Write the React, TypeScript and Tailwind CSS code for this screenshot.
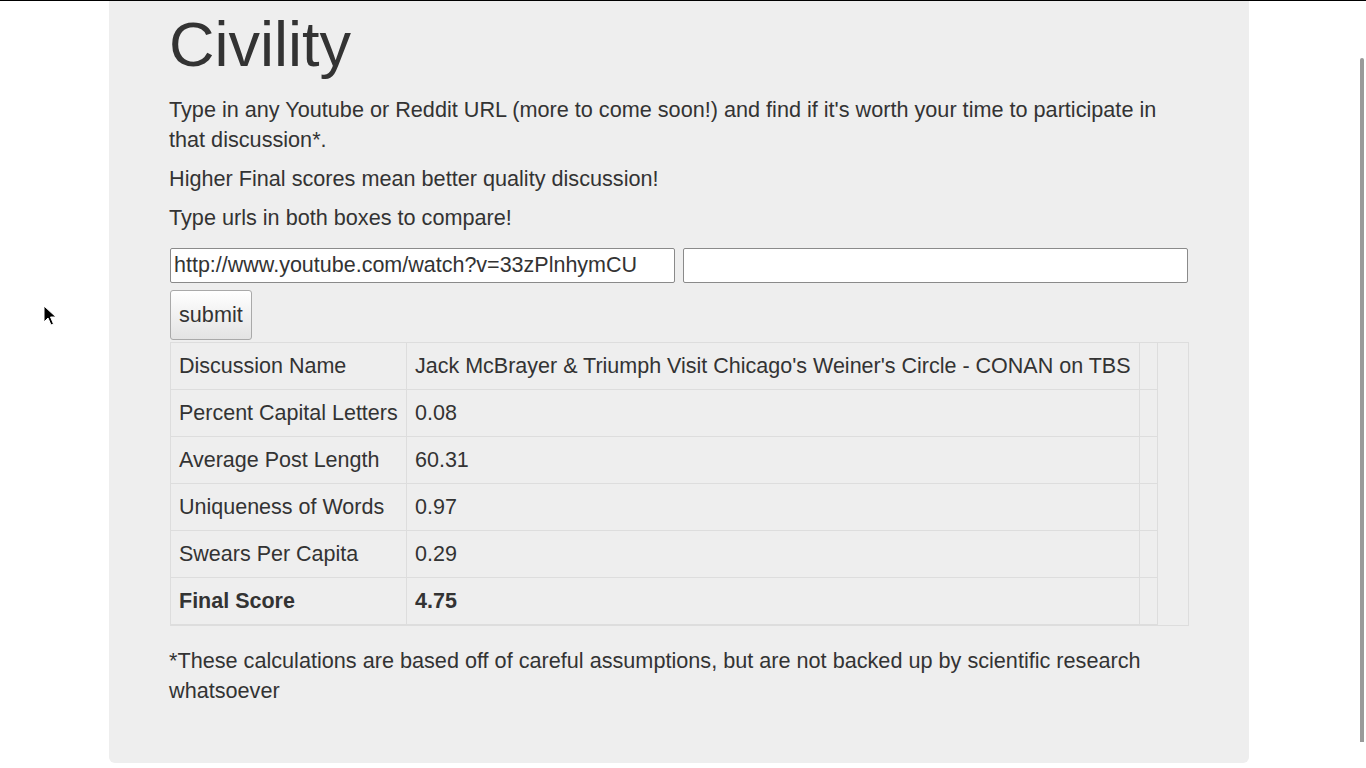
import React from 'react'

type Row = { label: string; value: string; bold?: boolean }

const rows: Row[] = [
  { label: 'Discussion Name', value: "Jack McBrayer & Triumph Visit Chicago's Weiner's Circle - CONAN on TBS" },
  { label: 'Percent Capital Letters', value: '0.08' },
  { label: 'Average Post Length', value: '60.31' },
  { label: 'Uniqueness of Words', value: '0.97' },
  { label: 'Swears Per Capita', value: '0.29' },
  { label: 'Final Score', value: '4.75', bold: true },
]

export default function App() {
  return (
    <div className="relative min-h-[768px] bg-white text-[#333] overflow-hidden" style={{ fontFamily: '"Liberation Sans", Arial, sans-serif' }}>
      <div className="h-px bg-black" />
      <div className="ml-[109px] w-[1140px] bg-[#eee] rounded-b-[6px] pl-[60px] pr-[60px] pt-[9px] pb-[57px]">
        <h1 className="text-[63px] leading-[69px] mb-[16px]">Civility</h1>
        <p className="text-[21.65px] leading-[30px] mb-[9px]">
          Type in any Youtube or Reddit URL (more to come soon!) and find if it's worth your time to participate in that discussion*.
        </p>
        <p className="text-[21.65px] leading-[30px] mb-[9px]">Higher Final scores mean better quality discussion!</p>
        <p className="text-[21.65px] leading-[30px] mb-[15px]">Type urls in both boxes to compare!</p>

        <div className="flex gap-[8px] pl-px">
          <input
            className="w-[505px] h-[35px] bg-white border border-[#8a8a8a] rounded-[2px] px-[3px] text-[21.5px] text-[#333] outline-none"
            defaultValue="http://www.youtube.com/watch?v=33zPlnhymCU"
          />
          <input className="w-[505px] h-[35px] bg-white border border-[#8a8a8a] rounded-[2px] px-[3px] text-[21.5px] outline-none" />
        </div>
        <div className="pl-px mt-[7px]">
          <button className="h-[50px] px-[8px] text-[21.65px] text-[#333] border border-[#a9a9a9] rounded-[3px] bg-gradient-to-b from-white to-[#e3e3e3]">
            submit
          </button>
        </div>

        <div className="mt-[2px] ml-px border border-[#ddd] w-[1019px]">
          <div className="w-[987px] border-r border-[#ddd]">
            {rows.map(r => (
              <div key={r.label} className="flex border-b border-[#ddd] text-[21.5px] leading-[30px]">
                <div className={`w-[236px] shrink-0 px-[8px] py-[8px] border-r border-[#ddd] whitespace-nowrap ${r.bold ? 'font-bold' : ''}`}>{r.label}</div>
                <div className={`w-[733px] shrink-0 px-[8px] py-[8px] border-r border-[#ddd] whitespace-nowrap ${r.bold ? 'font-bold' : ''}`}>{r.value}</div>
                <div className="flex-1" />
              </div>
            ))}
          </div>
        </div>

        <p className="text-[21.65px] leading-[30px] mt-[20px]">
          *These calculations are based off of careful assumptions, but are not backed up by scientific research whatsoever
        </p>
      </div>

      {/* scroll indicator */}
      <div className="absolute left-[1360px] top-[58px] w-[4px] h-[684px] bg-[#9a9a9a] rounded-t-[2px]" />

      {/* mouse pointer */}
      <svg className="absolute left-[43px] top-[305px]" width="14" height="22" viewBox="0 0 14 22">
        <path d="M1 1 L1 17 L5 13 L8 20 L10.5 19 L7.5 12 L13 12 Z" fill="black" stroke="white" strokeWidth="1" />
      </svg>
    </div>
  )
}
